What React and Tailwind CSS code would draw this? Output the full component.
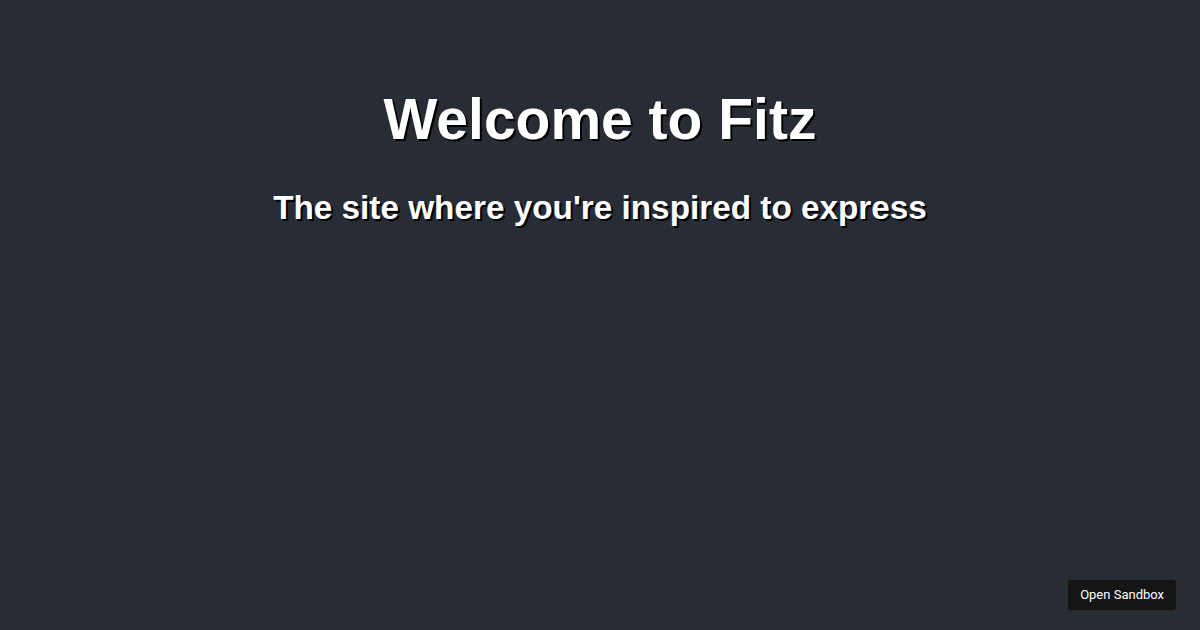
export default function App() {
  return (
    <div className="w-[1200px] h-[630px] bg-[#282c34] relative overflow-hidden" style={{ fontFamily: '"Liberation Sans", Arial, sans-serif' }}>
      <div className="flex flex-col items-center pt-[86px]">
        <h1 className="text-[57px] font-bold text-white leading-[66px] [text-shadow:2px_2px_0_#000]">Welcome to Fitz</h1>
        <h2 className="mt-[36px] text-[33.3px] font-bold text-white leading-[40px] [text-shadow:2px_2px_0_#000]">The site where you're inspired to express</h2>
      </div>
      <button className="absolute right-[23px] bottom-[19px] h-[32px] px-[12px] rounded-[4px] bg-[#151515] border border-[#2a2a2a] text-[13px] text-white" style={{ fontFamily: 'Roboto, "Liberation Sans", sans-serif' }}>Open Sandbox</button>
    </div>
  );
}
